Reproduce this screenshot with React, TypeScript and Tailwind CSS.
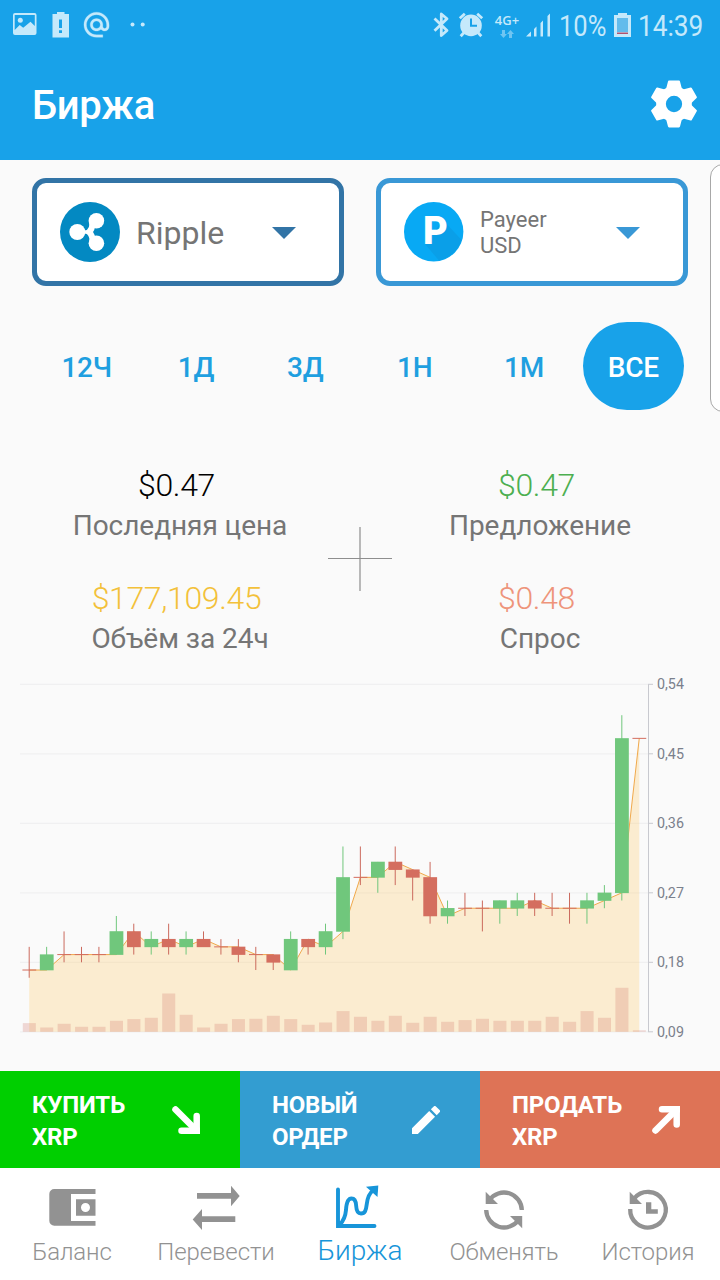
import type { ReactNode } from "react";

type Candle = {
  open: number;
  close: number;
  high: number;
  low: number;
  volume: number;
};

const toCandle = ([open, close, high, low, volume]: number[]): Candle => ({ open, close, high, low, volume });

// open, close, high, low (in cents) and volume
const candles: Candle[] = [
  [17, 17, 20, 16, 8.7],
  [17, 19, 20, 17, 4.3],
  [19, 19, 22, 18, 8],
  [19, 19, 20, 18, 5],
  [19, 19, 20, 18, 5],
  [19, 22, 24, 19, 11],
  [22, 20, 23, 19, 12.7],
  [20, 21, 22, 19, 14],
  [21, 20, 23, 19, 38.3],
  [20, 21, 22, 19, 17],
  [21, 20, 22, 20, 4.3],
  [20, 20, 21, 19, 8],
  [20, 19, 21, 18, 12.7],
  [19, 19, 20, 17, 13],
  [19, 18, 19, 17, 16],
  [17, 21, 22, 17, 12.7],
  [21, 20, 21, 19, 7],
  [20, 22, 23, 19, 9.3],
  [22, 29, 33, 21, 20.7],
  [29, 29, 33, 28, 15],
  [29, 31, 31, 27, 11],
  [31, 30, 33, 28, 16],
  [30, 29, 30, 26, 9],
  [29, 24, 31, 23, 15],
  [24, 25, 26, 23, 10],
  [25, 25, 27, 24, 11.7],
  [25, 25, 26, 22, 13],
  [25, 26, 26, 23, 11],
  [25, 26, 27, 24, 11],
  [26, 25, 27, 24, 11],
  [25, 25, 27, 24, 15],
  [25, 25, 27, 23, 10],
  [25, 26, 27, 23, 20.7],
  [26, 27, 28, 25, 14],
  [27, 47, 50, 26, 44],
  [47, 47, 47, 47, 1.5],
].map(toCandle);

const ticks = [54, 45, 36, 27, 18, 9];

const CHART_BOTTOM = 360.8;
const priceY = (price: number) => CHART_BOTTOM - (price - 9) * 7.722;
const candleX = (index: number) => 29.2 + index * 17.43;

const PriceChart = () => {
  const points = candles.map((c, i) => `${candleX(i)},${priceY(c.open)}`).join(" ");
  const lastX = candleX(candles.length - 1);

  return (
    <svg viewBox="0 0 720 401" className="block h-[401px] w-full">
      {ticks.map((tick) => (
        <g key={tick}>
          <line x1="20" x2="648" y1={priceY(tick)} y2={priceY(tick)} stroke="#f0f0f1" strokeWidth="1.2" />
          <line x1="648" x2="653" y1={priceY(tick)} y2={priceY(tick)} stroke="#c8c9cf" />
          <text x="657" y={priceY(tick) + 5} fontSize="14.3" fill="#7a808c" fontFamily="Roboto, sans-serif">
            {`0,${String(tick).padStart(2, "0")}`}
          </text>
        </g>
      ))}
      <line x1="648.5" x2="648.5" y1={priceY(54)} y2={CHART_BOTTOM} stroke="#c8c9cf" />
      <polygon
        points={`${candleX(0)},${CHART_BOTTOM} ${points} ${lastX},${CHART_BOTTOM}`}
        fill="rgba(255,194,82,0.25)"
      />
      <polyline points={points} fill="none" stroke="#f0a94c" strokeWidth="1" />
      {candles.map((c, i) => (
        <rect
          key={i}
          x={candleX(i) - 6.4}
          y={CHART_BOTTOM - c.volume}
          width="13"
          height={c.volume}
          fill="rgba(208,112,100,0.25)"
        />
      ))}
      {candles.map((c, i) => {
        const up = c.close > c.open;
        const flat = c.close === c.open;
        const top = priceY(Math.max(c.open, c.close));
        const height = Math.abs(c.close - c.open) * 7.722;
        return (
          <g key={i}>
            {c.high > c.low && (
              <line
                x1={candleX(i)}
                x2={candleX(i)}
                y1={priceY(c.high)}
                y2={priceY(c.low)}
                stroke={up ? "#70c77c" : "#cb6a5d"}
                strokeWidth="1"
              />
            )}
            <rect
              x={candleX(i) - 6.8}
              y={flat ? top - 0.5 : top - 0.2}
              width="13.8"
              height={flat ? 1 : height + 0.5}
              fill={up ? "#70c77c" : "#d46e5f"}
            />
          </g>
        );
      })}
    </svg>
  );
};

const StatusBar = () => (
  <div className="flex h-[50px] items-center text-[#c5e9fb]">
    <svg viewBox="0 0 240 50" className="h-[50px] w-[240px]" fill="currentColor">
      <path
        fillRule="evenodd"
        d="M15 13h19.5a2 2 0 0 1 2 2v18a2 2 0 0 1-2 2H15a2 2 0 0 1-2-2V15a2 2 0 0 1 2-2zm-.3 2v15l5-5 3.500 2.700 7.300-5.900 4.300 4.200V15z"
      />
      <circle cx="20.3" cy="20.3" r="2.5" />
      <path fillRule="evenodd" d="M57 14v-2h7.500v2H69v23.500H52.500V14zm2 5.500v8.500h3v-8.500zm0 10.800v2.700h3v-2.700z" />
      <g transform="translate(81.400 9.700) scale(1.260)">
        <path
          stroke="currentColor"
          strokeWidth="0.2"
          d="M12 1.950c-5.520 0-10 4.480-10 10s4.480 10 10 10h5v-2h-5c-4.340 0-8-3.660-8-8s3.660-8 8-8 8 3.660 8 8v1.430c0 .79-.71 1.570-1.500 1.570s-1.500-.78-1.500-1.570v-1.430c0-2.760-2.240-5-5-5s-5 2.240-5 5 2.240 5 5 5c1.380 0 2.640-.56 3.540-1.470.65.89 1.770 1.470 2.960 1.470 1.970 0 3.500-1.600 3.500-3.570v-1.430c0-5.520-4.480-10-10-10zm0 13c-1.660 0-3-1.340-3-3s1.340-3 3-3 3 1.340 3 3-1.340 3-3 3z"
        />
      </g>
      <circle cx="132.5" cy="24.5" r="2" />
      <circle cx="142.7" cy="24.5" r="2" />
    </svg>
    <svg viewBox="432 0 54 50" className="ml-[192px] h-[50px] w-[54px]" fill="none" stroke="currentColor">
      <path d="M434.500 18.500L447 30.500l-5.700 5V14l5.700 4.800-12.500 12" strokeWidth="2.8" strokeLinejoin="round" />
      <circle cx="471" cy="25.4" r="10.8" fill="currentColor" stroke="none" />
      <path d="M459.800 18.200l5-4.500M482.200 18.200l-5-4.500M464.500 32l-3.800 4.200M477.500 32l3.800 4.200" strokeWidth="2.8" />
      <path d="M471 18.500v7.200h6" stroke="#18a2e9" strokeWidth="2" />
    </svg>
    <div className="ml-[8px] flex w-[26px] flex-col items-center">
      <span className="text-[13px]/[14px] font-semibold font-['Open_Sans',sans-serif]">4G+</span>
      <svg viewBox="0 0 14 8" className="mt-[3px] h-2 w-3.5 opacity-50" fill="currentColor">
        <path d="M2 0h3v4h2L3.500 8 0 4h2zM9 8h3V4h2l-3.500-4L7 4h2z" />
      </svg>
    </div>
    <svg viewBox="0 0 25 24" className="ml-[6px] h-6 w-[25px]" fill="currentColor">
      <path d="M0 23.500l5-5v5zM8 23.500V16l2.500-2.500v10zM14.500 23.500V10L17 7.500v16zM21.500 23.500V3L24 .5v23z" />
    </svg>
    <span className="ml-[8px] w-[47px] origin-left scale-x-[0.88] whitespace-nowrap pt-[3px] text-[29px]">10%</span>
    <svg viewBox="0 0 17 26" className="ml-[8px] h-[26px] w-[17px]" fill="currentColor">
      <path d="M4 3V1h9v2h4v22H0V3z" />
      <path d="M3 6h11v14H3z" fill="#63bcec" />
      <path d="M3 20.500h11v1.500H3z" fill="#b0526e" />
    </svg>
    <span className="ml-[7px] origin-left scale-x-[0.905] whitespace-nowrap pt-[3px] text-[29px]">14:39</span>
  </div>
);

const gearTeeth = [0, 60, 120, 180, 240, 300];

const GearIcon = () => (
  <svg viewBox="-24 -24 48 48" className="mb-[3px] h-12 w-12" fill="currentColor">
    <circle r="13" fill="none" stroke="currentColor" strokeWidth="9.7" />
    {gearTeeth.map((angle) => (
      <path
        key={angle}
        d="M-5-23.400H5q.8 0 1 .8L7.700-16v3H-7.700v-3L-6-22.600q.2-.8 1-.8z"
        transform={`rotate(${angle})`}
      />
    ))}
  </svg>
);

const Header = () => (
  <header className="flex h-[110px] items-center justify-between pl-8 pr-[22px] text-white">
    <h1 className="pt-px text-[40px] font-medium tracking-[-0.2px]">Биржа</h1>
    <GearIcon />
  </header>
);

const RippleLogo = () => (
  <svg viewBox="0 0 60 60" className="h-[60px] w-[60px] shrink-0">
    <circle cx="30" cy="30" r="30" fill="#0389c2" />
    <g fill="#fff" stroke="#fff">
      <circle cx="17.3" cy="30" r="8" stroke="none" />
      <circle cx="36.4" cy="18.7" r="7.8" stroke="none" />
      <circle cx="36.4" cy="41.3" r="7.8" stroke="none" />
      <path d="M22 30h8" strokeWidth="3.5" />
      <path d="M32.500 21q0 6-3.500 9 3.500 3 3.500 9" strokeWidth="6" fill="none" />
    </g>
  </svg>
);

const PayeerLogo = () => (
  <svg viewBox="0 0 60 60" className="h-[60px] w-[60px] shrink-0">
    <circle cx="29.7" cy="29.7" r="29.7" fill="#08a9f4" />
    <path d="M21 42l14 16.500A29.700 29.700 0 0 0 57.500 38L39 18z" fill="#0a9fe8" />
    <text x="19" y="42" fontSize="38" fontWeight="900" fill="#fff" fontFamily="Roboto, sans-serif">
      P
    </text>
  </svg>
);

type CurrencySelectProps = {
  logo: ReactNode;
  children: ReactNode;
  className: string;
};

const CurrencySelect = ({ logo, children, className }: CurrencySelectProps) => (
  <button className={`flex h-[108px] w-[312px] items-center rounded-[14px] border-[5px] bg-white pl-[23px] ${className}`}>
    {logo}
    <span className="ml-4 pt-0.5 text-left text-[#757575]">{children}</span>
    <svg viewBox="0 0 24 12" className="ml-auto mr-[43px] mt-0.5 h-3 w-6" fill="currentColor">
      <path d="M0 0h24L12 12z" />
    </svg>
  </button>
);

const periods = ["12Ч", "1Д", "3Д", "1Н", "1М", "ВСЕ"];

const PeriodTabs = () => (
  <div className="mt-9 grid h-[88px] grid-cols-6 px-8">
    {periods.map((period) => (
      <button
        key={period}
        className={`mx-auto w-[101px] rounded-[44px] pt-[3px] text-[28px] font-medium tracking-[-0.2px] ${
          period === "ВСЕ" ? "bg-[#18a2e9] text-white" : "text-[#1f9fe0]"
        }`}
      >
        {period}
      </button>
    ))}
  </div>
);

type StatProps = {
  value: string;
  label: string;
  color: string;
};

const Stat = ({ value, label, color }: StatProps) => (
  <div className="flex h-[113px] flex-col items-center">
    <div className={`pr-[7px] text-[32px]/[40px] font-light tracking-[-0.35px] ${color}`}>{value}</div>
    <div className="pt-px text-[28px]/[40px] tracking-[-0.05px] text-[#757575]">{label}</div>
  </div>
);

const Stats = () => (
  <div className="relative mt-[55px] grid grid-cols-2">
    <Stat value="$0.47" label="Последняя цена" color="text-black" />
    <Stat value="$0.47" label="Предложение" color="text-[#4caf50]" />
    <Stat value="$177,109.45" label="Объём за 24ч" color="text-[#f3c13a]" />
    <Stat value="$0.48" label="Спрос" color="text-[#ee947a]" />
    <svg viewBox="0 0 64 64" className="absolute left-[328px] top-[62px] h-16 w-16" stroke="#8e8e8e" strokeWidth="1.2">
      <path d="M32 0v64M0 31.500h64" />
    </svg>
  </div>
);

type ActionProps = {
  lines: [string, string];
  className: string;
  icon: ReactNode;
};

const Action = ({ lines, className, icon }: ActionProps) => (
  <button className={`flex items-center justify-between pl-8 pr-10 text-left text-white ${className}`}>
    <span className="pt-0.5 text-[24px]/[32px] font-bold tracking-[-0.2px]">
      {lines[0]}
      <br />
      {lines[1]}
    </span>
    {icon}
  </button>
);

const ArrowIcon = ({ className = "" }: { className?: string }) => (
  <svg viewBox="0 0 28 28" className={`h-7 w-7 shrink-0 ${className}`} fill="none" stroke="#fff" strokeWidth="6.5">
    <path d="M3.500 3.500L23 23" strokeLinecap="round" />
    <path d="M24.700 10v14.700H9.500" strokeLinecap="round" />
    <path d="M21 28h7v-7z" fill="#fff" stroke="none" />
  </svg>
);

const PencilIcon = () => (
  <svg viewBox="3 3 18 18" className="h-7 w-7 shrink-0" fill="#fff">
    <path d="M3 17.250V21h3.750L17.810 9.940l-3.750-3.750zM20.710 7.040a1 1 0 0 0 0-1.410l-2.340-2.340a1 1 0 0 0-1.410 0l-1.830 1.830 3.750 3.750z" />
  </svg>
);

const Actions = () => (
  <div className="grid h-[97px] grid-cols-3">
    <Action lines={["КУПИТЬ", "XRP"]} className="bg-[#00cf00]" icon={<ArrowIcon />} />
    <Action lines={["НОВЫЙ", "ОРДЕР"]} className="bg-[#339dd1]" icon={<PencilIcon />} />
    <Action lines={["ПРОДАТЬ", "XRP"]} className="bg-[#de7356]" icon={<ArrowIcon className="-rotate-90" />} />
  </div>
);

const NavIcon = ({ children }: { children: ReactNode }) => (
  <svg viewBox="0 0 56 48" className="h-12 w-14" fill="currentColor">
    {children}
  </svg>
);

const navItems = [
  {
    label: "Баланс",
    icon: (
      <NavIcon>
        <path
          fillRule="evenodd"
          d="M10.300 5h41.200v5H27v27h24.500v4.700H10.300a5 5 0 0 1-5-5V10a5 5 0 0 1 5-5zM32 15.300h19.500v16.400H32zM41.500 19a4.500 4.500 0 1 0 0 9 4.500 4.500 0 0 0 0-9z"
        />
      </NavIcon>
    ),
  },
  {
    label: "Перевести",
    icon: (
      <NavIcon>
        <path d="M9 9h34V1.700L51.700 12 43 22.300v-7.500H9zM47.300 32.300H14V25L4.700 35.500 14 46v-8h33.300z" />
      </NavIcon>
    ),
  },
  {
    label: "Биржа",
    active: true,
    icon: (
      <NavIcon>
        <path
          d="M6 5.500V42h36.500M7.500 41c4-4 6-9 6.500-15 .4-7 1.500-11.500 5.500-11.500 3.800 0 4.500 3 4.700 7.500.2 5 1.300 7.500 4.800 7.500 4 0 5-3 5.700-9 .7-7 2-11 6.800-14.500"
          fill="none"
          stroke="currentColor"
          strokeWidth="3.9"
          strokeLinecap="round"
        />
        <path d="M34 2.800l12.300-1.300-.8 11.500z" />
      </NavIcon>
    ),
  },
  {
    label: "Обменять",
    icon: (
      <NavIcon>
        <path
          d="M13.500 16a17.800 17.800 0 0 1 32.300 10M10.200 26a17.800 17.800 0 0 0 32.300 10"
          fill="none"
          stroke="currentColor"
          strokeWidth="4.3"
        />
        <path d="M9.700 7.700V20H22zM46.200 44.300V32H34z" />
      </NavIcon>
    ),
  },
  {
    label: "История",
    icon: (
      <NavIcon>
        <path
          d="M10.200 25a17.800 17.800 0 1 0 4-10.500"
          fill="none"
          stroke="currentColor"
          strokeWidth="4.3"
        />
        <path d="M9.700 7.700V20H22zM26 18.300h5.300v7h6.500v4.400H26z" />
      </NavIcon>
    ),
  },
];

const BottomNav = () => (
  <nav className="grid h-28 grid-cols-5 bg-white pt-4">
    {navItems.map(({ label, icon, active }) => (
      <button
        key={label}
        className={`flex flex-col items-center font-light ${active ? "text-[#1795d9]" : "text-[#929292]"}`}
      >
        {icon}
        <span
          className={`whitespace-nowrap ${
            active ? "pt-px text-[28px]/[36px]" : "pt-0.5 text-[24px]/[36px] tracking-[-0.1px]"
          }`}
        >
          {label}
        </span>
      </button>
    ))}
  </nav>
);

export default function App() {
  return (
    <div className="relative h-[1280px] w-[720px] overflow-hidden bg-[#fafafa] font-[Roboto,sans-serif]">
      <div className="h-[160px] bg-[#18a2e9]">
        <StatusBar />
        <Header />
      </div>
      <main className="h-[911px] pt-[18px]">
        <div className="flex justify-between px-8">
          <CurrencySelect logo={<RippleLogo />} className="border-[#3274a6] text-[#3274a6]">
            <span className="text-[32px]">Ripple</span>
          </CurrencySelect>
          <CurrencySelect logo={<PayeerLogo />} className="border-[#3998d6] text-[#3998d6]">
            <span className="block text-[22px]/[26px]">
              Payeer
              <br />
              USD
            </span>
          </CurrencySelect>
        </div>
        <PeriodTabs />
        <Stats />
        <div className="-mt-5">
          <PriceChart />
        </div>
      </main>
      <Actions />
      <BottomNav />
      <div className="absolute -right-4 top-[164px] h-[248px] w-[26px] rounded-[14px] border border-[#a8a8a8] bg-white" />
    </div>
  );
}
